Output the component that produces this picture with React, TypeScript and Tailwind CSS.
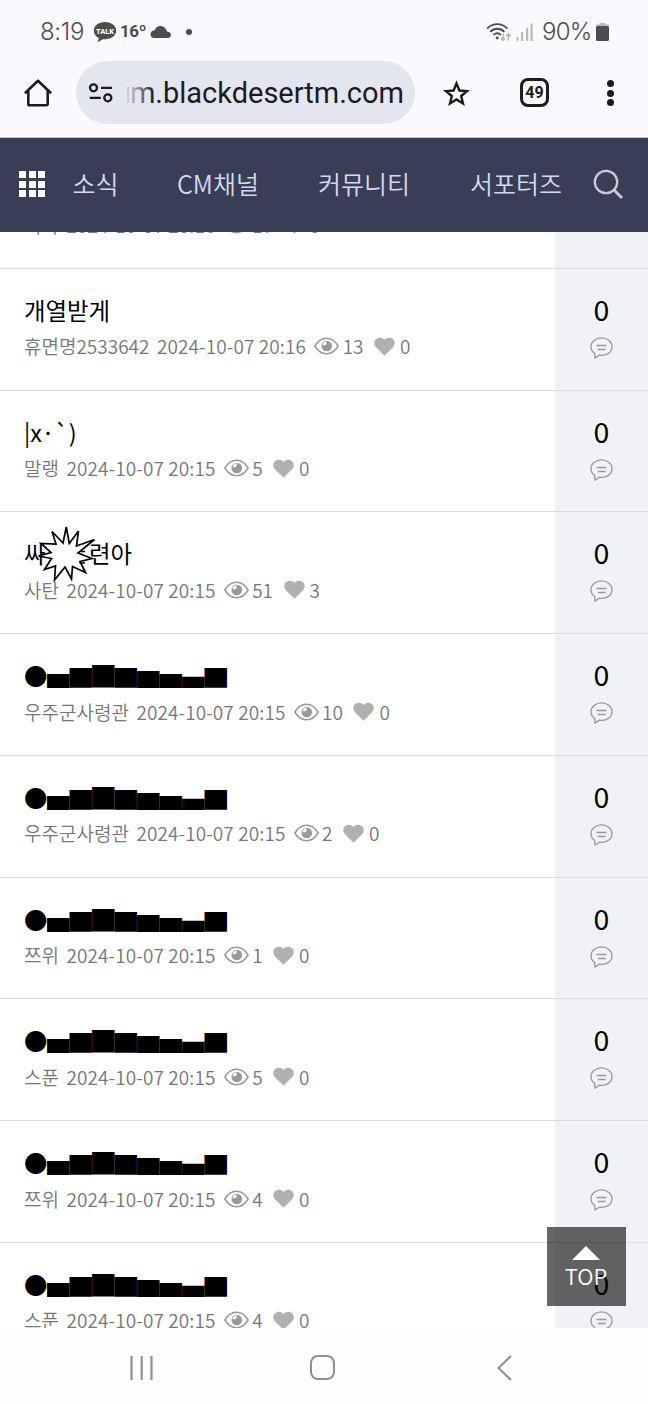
type Post = {
  title: string;
  author: string;
  time: string;
  views: number;
  likes: number;
  burst?: boolean;
  blocks?: boolean;
  noComments?: boolean;
};

const BLOCKS = "▅▇█▇▆▅▄▇";

const posts: Post[] = [
  { title: "", author: "리자", time: "2024-10-07 20:16", views: 17, likes: 0, noComments: true },
  { title: "개열받게", author: "휴면명2533642", time: "2024-10-07 20:16", views: 13, likes: 0 },
  { title: "|x·`)", author: "말랭", time: "2024-10-07 20:15", views: 5, likes: 0 },
  { title: "싸", author: "사탄", time: "2024-10-07 20:15", views: 51, likes: 3, burst: true },
  { title: "●", author: "우주군사령관", time: "2024-10-07 20:15", views: 10, likes: 0, blocks: true },
  { title: "●", author: "우주군사령관", time: "2024-10-07 20:15", views: 2, likes: 0, blocks: true },
  { title: "●", author: "쯔위", time: "2024-10-07 20:15", views: 1, likes: 0, blocks: true },
  { title: "●", author: "스푼", time: "2024-10-07 20:15", views: 5, likes: 0, blocks: true },
  { title: "●", author: "쯔위", time: "2024-10-07 20:15", views: 4, likes: 0, blocks: true },
  { title: "●", author: "스푼", time: "2024-10-07 20:15", views: 4, likes: 0, blocks: true },
];

function StatusBar() {
  return (
    <div className="flex h-[61px] items-center pl-[39px] pr-[39px] pt-[2px] font-['Roboto',sans-serif] text-[#4d4d50]">
      <span className="w-[47px] whitespace-nowrap pl-px font-['Inter',sans-serif] text-[24px] font-light leading-none tracking-[-0.3px]">8:19</span>
      <svg className="ml-[7px] h-[22px] w-[24px]" viewBox="0 0 24 22">
        <path d="M12 1C5.500 1 .8 4.800.8 9.800c0 3.300 2 5.900 5 7.300L4.800 21.300l5-3.100c7.800.8 13.400-3.100 13.400-8.400C23.200 4.800 18.300 1 12 1z" fill="#4d4d50" />
        <text x="12" y="12.500" textAnchor="middle" fontSize="7.800" fontWeight="800" fill="#fff" fontFamily="Roboto" textLength="18" lengthAdjust="spacingAndGlyphs">TALK</text>
      </svg>
      <span className="ml-[3px] w-[26px] whitespace-nowrap text-[17px] font-bold leading-none tracking-[-0.4px]">16º</span>
      <svg className="ml-1 h-[14px] w-[22px]" viewBox="0 0 22 14" fill="#4d4d50">
        <path d="M4 13h14.300a3.200 3.200 0 0 0 .1-6.300h-1.300C15.800 2.500 12.800 1 10.100 1 7.500 1 5.500 2.700 4.900 5.300 2.200 5.400.5 7.100.5 9.300.5 11.500 2 13 4 13z" />
      </svg>
      <span className="ml-[14px] h-1.5 w-1.5 rounded-full bg-[#4d4d50]" />
      <svg className="ml-auto h-[20px] w-[26px]" viewBox="0 0 26 20" fill="none" strokeWidth="1.900">
        <g stroke="#4d4d50">
          <path d="M1.200 6.500C7 .6 15.600.6 21.400 6.500" />
          <path d="M4.300 9.800c4-4 10-4 14 0" />
          <path d="M7.500 12.900c2.300-2.100 5.300-2.100 7.600 0" />
        </g>
        <circle cx="11.300" cy="16" r="1.400" fill="#4d4d50" />
        <path d="M17 11.500v6.700M14.800 16l2.200 2.400 2.200-2.400M22.400 18.700v-6.700M20.200 14.200l2.200-2.400 2.200 2.400" stroke="#b5b5b8" strokeWidth="1.500" />
      </svg>
      <svg className="ml-1 h-[18px] w-[18px]" viewBox="0 0 18 18" fill="#b9b9bc">
        <rect x="0.500" y="14" width="2" height="4" />
        <rect x="5" y="9" width="2.200" height="9" />
        <rect x="10" y="5" width="2.200" height="13" />
        <rect x="14.500" y="0.500" width="2.200" height="17.500" />
      </svg>
      <span className="ml-2 w-[51px] whitespace-nowrap font-['Inter',sans-serif] text-[24px] font-light leading-none tracking-[-0.7px]">90%</span>
      <svg className="ml-[3px] h-[18px] w-[13px]" viewBox="0 0 13 18">
        <path d="M3.500 0h6v1.500H13V4H0V1.500h3.500z" fill="#b9b9bc" />
        <rect x="0" y="3" width="13" height="15" rx="1.500" fill="#4d4d50" />
      </svg>
    </div>
  );
}

function BrowserBar() {
  return (
    <div className="flex h-[77px] items-start border-b border-[#c3c4d0] text-[#1c1b20]">
      <svg className="ml-[24px] mt-[18px] h-[28px] w-[28px]" viewBox="0 0 28 28" fill="none" stroke="currentColor" strokeWidth="2.600">
        <path d="M.9 14.200 14 1.800l13.100 12.400M4.300 12v13a1.300 1.300 0 0 0 1.300 1.300h16.800a1.300 1.300 0 0 0 1.300-1.300V12" strokeLinejoin="round" />
      </svg>
      <div className="ml-[24px] flex h-[63px] w-[339px] items-center overflow-hidden rounded-full bg-[#e3e5ef]">
        <svg className="ml-[12px] h-[20px] w-[26px] shrink-0" viewBox="0 0 26 20" fill="none" stroke="currentColor" strokeWidth="2.300">
          <circle cx="5.500" cy="4.800" r="3.500" />
          <circle cx="19.800" cy="14.800" r="3.500" />
          <path d="M13 4.800h11M1.800 14.800h11" />
        </svg>
        <div className="relative ml-[12px] flex w-[278px] justify-end overflow-hidden">
          <span className="whitespace-nowrap font-['Roboto',sans-serif] text-[29px] leading-[40px]">m.blackdesertm.com</span>
          <span className="absolute left-0 top-0 h-full w-7 bg-gradient-to-r from-[#e3e5ef] to-transparent" />
          <span className="absolute left-[1px] top-[14px] h-[16px] w-[1.500px] bg-[#c9cbd5]" />
        </div>
      </div>
      <svg className="ml-[28px] mt-[19px] h-[27px] w-[27px]" viewBox="0 0 27 27" fill="none" stroke="currentColor" strokeWidth="2.400">
        <path d="m13.500 3.500 2.900 7 7.600.6-5.800 4.900 1.800 7.400-6.500-4-6.500 4L8.800 16 3 11.100l7.600-.6z" />
      </svg>
      <div className="ml-[50px] mt-[17px] flex h-[29px] w-[29px] items-center justify-center rounded-[8px] border-[3px] border-current font-['Roboto',sans-serif] text-[16px] font-bold leading-none">49</div>
      <div className="ml-[58px] mt-[19px] flex flex-col gap-[2.500px]">
        <i className="h-[7px] w-[7px] rounded-full bg-current" />
        <i className="h-[7px] w-[7px] rounded-full bg-current" />
        <i className="h-[7px] w-[7px] rounded-full bg-current" />
      </div>
    </div>
  );
}

function SiteNav() {
  return (
    <nav className="flex h-[94px] shrink-0 items-center bg-[#393d56] pb-[2px] pl-[19px] text-[25px] font-[350] leading-none text-[#d5d9ef]">
      <div className="grid grid-cols-3 gap-[2.500px]">
        {Array.from({ length: 9 }, (_, i) => (
          <i key={i} className="h-[7px] w-[7px] bg-white" />
        ))}
      </div>
      <span className="-mt-[2px] ml-[27.500px] w-[104.500px]">소식</span>
      <span className="-mt-[2px] w-[141px]">CM채널</span>
      <span className="-mt-[2px] w-[152px]">커뮤니티</span>
      <span className="-mt-[2px] w-[123px]">서포터즈</span>
      <svg className="h-[30px] w-[31px]" viewBox="0 0 31 30" fill="none" stroke="#c9cbd6" strokeWidth="2.300">
        <circle cx="13" cy="13" r="11.200" />
        <path d="m21 21 8 8" strokeWidth="2.800" />
      </svg>
    </nav>
  );
}

function EyeIcon() {
  return (
    <svg className="ml-2 h-[18px] w-[25px]" viewBox="0 0 25 18">
      <path d="M.9 9C3.700 4.300 7.800 1.300 12.500 1.300S21.300 4.300 24.100 9c-2.800 4.700-6.900 7.700-11.600 7.700S3.700 13.700.9 9z" fill="none" stroke="#999" strokeWidth="1.500" />
      <circle cx="12.800" cy="9" r="5.300" fill="#999" />
      <path d="M8.600 8.200a4.500 4.500 0 0 1 4-3.900v2.200a1.800 1.800 0 0 1-1.800 1.700z" fill="#fff" />
    </svg>
  );
}

function HeartIcon() {
  return (
    <svg className="ml-[10.500px] h-[19px] w-[21px]" viewBox="0 0 21 19" fill="#b0b0b0">
      <path d="M10.500 18.800 1.900 10.300C-.3 8-.2 4.400 1.900 2.300 4.300-.1 8.200.1 10.500 3 12.800.1 16.700-.1 19.100 2.300c2.100 2.100 2.200 5.700 0 8z" />
    </svg>
  );
}

function CommentIcon() {
  return (
    <svg className="mt-[12px] h-[22px] w-[23px]" viewBox="0 0 23 22" fill="none" stroke="#999" strokeWidth="1.300">
      <path d="M11.500.9C5.600.9 1 4.700 1 9.700c0 2.900 1.400 5.200 3.700 6.700l.2 4.700 4.300-2.900c7.400 1 12.800-3 12.800-8.500C22 4.700 17.400.9 11.500.9z" strokeLinejoin="round" />
      <path d="M6.500 8.500h10M7.800 12.500h7.800" strokeWidth="1.500" />
    </svg>
  );
}

function Burst() {
  return (
    <svg className="absolute left-[14px] top-[-13px] h-[58px] w-[58px]" viewBox="38 526 58 58" fill="#fff" stroke="#000" strokeWidth="1.700">
      <path d="M66.300 528 69.300 544.500 78.500 532 76.500 547 94.500 540.500 78 554 92 559.500 80 562.500 85.500 573.500 72.500 567.500 71.500 580 65 568 54.500 581 55.500 567 44.500 570.500 51.500 559.500 38.500 557 51 553.500 41 544.500 56 545 52 532.500 63 544z" />
      <path d="M81 552.500h4M79.500 564h5.500" />
    </svg>
  );
}

function PostTitle({ post }: { post: Post }) {
  return (
    <div className="relative flex h-[30px] items-center whitespace-pre text-[23.400px] leading-[30px] text-black">
      <span>{post.title}</span>
      {post.blocks && <span className="-ml-[0.500px] text-[22.500px]">{BLOCKS}</span>}
      {post.burst && (
        <>
          <span className="ml-[43.500px]">련아</span>
          <Burst />
        </>
      )}
    </div>
  );
}

function PostRow({ post }: { post: Post }) {
  return (
    <div className="flex h-[121.750px] shrink-0 border-b border-[#dcdcdf]">
      <div className="flex w-[555px] flex-col pl-6 pt-[26px]">
        <PostTitle post={post} />
        <div className="mt-[6.500px] flex h-[30px] items-center whitespace-nowrap text-[19px] font-[350] leading-[30px] text-[#777]">
          <span>{post.author}</span>
          <span className="ml-[7.500px] tracking-[0.100px]">{post.time}</span>
          <EyeIcon />
          <span className="ml-[3.500px]">{post.views}</span>
          <HeartIcon />
          <span className="ml-[5px]">{post.likes}</span>
        </div>
      </div>
      <div className="flex flex-1 flex-col items-center bg-[#f1f2f8] pt-[26px] text-[28.500px] leading-[30px] text-black">
        {!post.noComments && (
          <>
            <span className="-mt-px mb-px">0</span>
            <CommentIcon />
          </>
        )}
      </div>
    </div>
  );
}

function SystemNav() {
  return (
    <div className="flex h-[76px] shrink-0 items-center bg-[#fefefe] pl-[130px] pt-[3px] text-[#8f8f8f]">
      <svg className="h-[26px] w-[24px]" viewBox="0 0 24 26" stroke="currentColor" strokeWidth="2.200">
        <path d="M1.500 1v24M11.700 1v24M21.500 1v24" />
      </svg>
      <span className="ml-[156px] h-[25px] w-[25px] rounded-[8px] border-2 border-current" />
      <svg className="ml-[162px] h-[26px] w-[15px]" viewBox="0 0 15 26" fill="none" stroke="currentColor" strokeWidth="2">
        <path d="M14 1 1.500 13 14 25" />
      </svg>
    </div>
  );
}

export default function App() {
  return (
    <div className="flex h-[1404px] w-[648px] flex-col overflow-hidden bg-white font-['Noto_Sans_CJK_KR',sans-serif]">
      <header className="h-[138px] shrink-0 bg-[#faf9fe]">
        <StatusBar />
        <BrowserBar />
      </header>
      <SiteNav />
      <main className="relative flex h-[1096px] shrink-0 flex-col overflow-hidden">
        <div className="mt-[-85px] flex flex-col">
          {posts.map((post, i) => (
            <PostRow key={i} post={post} />
          ))}
        </div>
        <button className="absolute right-[22px] top-[995px] flex h-[79px] w-[79px] flex-col items-center bg-black/60 pr-px pt-[19px] text-[22px] font-[350] leading-none text-white">
          <svg className="h-[14px] w-[28px]" viewBox="0 0 28 14" fill="#fff">
            <path d="M14 0 28 14H0z" />
          </svg>
          <span className="mt-[4px]">TOP</span>
        </button>
      </main>
      <SystemNav />
    </div>
  );
}
